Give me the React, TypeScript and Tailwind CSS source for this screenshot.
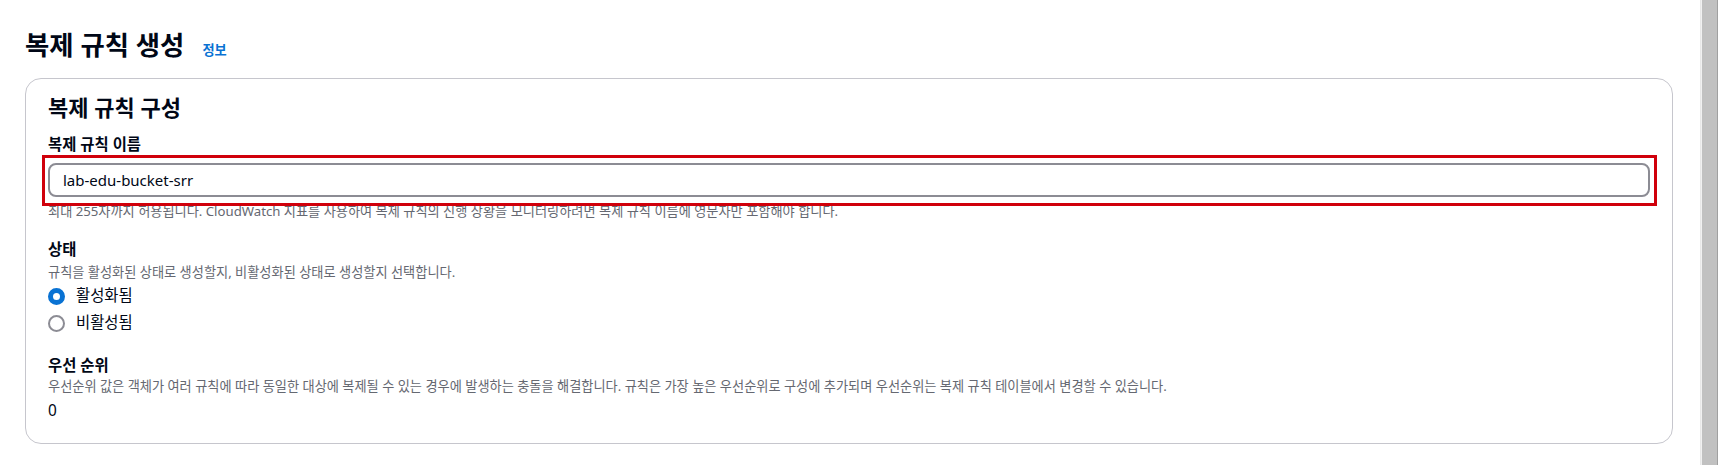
const fontStack = "font-['Noto_Sans','Noto_Sans_CJK_KR',sans-serif]"

function Radio({ checked, label }: { checked: boolean; label: string }) {
  return (
    <label className="flex h-[20px] items-center gap-[11px] text-[15.4px] leading-[20px] text-[#000716]">
      {checked ? (
        <span className="block h-[17px] w-[17px] rounded-full border-[5px] border-[#0972d3] bg-white" />
      ) : (
        <span className="block h-[17px] w-[17px] rounded-full border-2 border-[#8c8c94] bg-white" />
      )}
      <span>{label}</span>
    </label>
  )
}

export default function App() {
  return (
    <div className={`flex h-screen w-full bg-white ${fontStack}`}>
      <main className="min-w-0 flex-1 pl-[25px] pr-[27px] pt-[30px]">
        {/* 페이지 제목 */}
        <div className="flex items-baseline">
          <h1 className="text-[26.4px] font-bold leading-[30px] text-[#000716]">복제 규칙 생성</h1>
          <a className="ml-[18px] text-[13.2px] font-bold leading-[16px] text-[#0972d3]">정보</a>
        </div>

        <section className="mt-[18px] rounded-[16px] border border-[#c6c6cd] bg-white px-[22px] pb-[22px] pt-[16px]">
          <h2 className="text-[22px] font-bold leading-[24px] text-[#000716]">복제 규칙 구성</h2>

          {/* 이름 */}
          <div className="mt-[16px]">
            <div className="text-[15.4px] font-bold leading-[20px] text-[#000716]">복제 규칙 이름</div>
            <div className="relative mt-[8px]">
              <div className="flex h-[34px] items-center rounded-[8px] border-2 border-[#8c8c94] pl-[13px] text-[15px] text-[#000716]">
                lab-edu-bucket-srr
              </div>
              <div className="pointer-events-none absolute -bottom-[9px] -left-[6px] -right-[7px] -top-[8px] z-10 border-[3px] border-[#d0000b]" />
            </div>
            <p className="mt-[6px] text-[13.2px] leading-[16px] text-[#656871]">
              최대 255자까지 허용됩니다. CloudWatch 지표를 사용하여 복제 규칙의 진행 상황을 모니터링하려면 복제 규칙 이름에 영문자만 포함해야 합니다.
            </p>
          </div>

          {/* 상태 */}
          <div className="mt-[21px]">
            <div className="text-[15.4px] font-bold leading-[20px] text-[#000716]">상태</div>
            <p className="mt-[4px] text-[13.2px] leading-[16px] text-[#656871]">
              규칙을 활성화된 상태로 생성할지, 비활성화된 상태로 생성할지 선택합니다.
            </p>
            <div className="mt-[6px] flex flex-col gap-[7px]">
              <Radio checked label="활성화됨" />
              <Radio checked={false} label="비활성됨" />
            </div>
          </div>

          {/* 우선 순위 */}
          <div className="mt-[23px]">
            <div className="text-[15.4px] font-bold leading-[20px] text-[#000716]">우선 순위</div>
            <p className="mt-[2px] text-[13.2px] leading-[16px] text-[#656871]">
              우선순위 값은 객체가 여러 규칙에 따라 동일한 대상에 복제될 수 있는 경우에 발생하는 충돌을 해결합니다. 규칙은 가장 높은 우선순위로 구성에 추가되며 우선순위는 복제 규칙 테이블에서 변경할 수 있습니다.
            </p>
            <div className="mt-[7px] text-[15.4px] leading-[20px] text-[#000716]">0</div>
          </div>
        </section>
      </main>

      {/* 스크롤바 */}
      <div className="h-full w-[18px] shrink-0 border-l border-[#e8e8e8] bg-[#f1f1f1] pl-px">
        <div className="h-full w-full border-r border-[#a0a0a0] bg-[#c1c1c1]" />
      </div>
    </div>
  )
}
